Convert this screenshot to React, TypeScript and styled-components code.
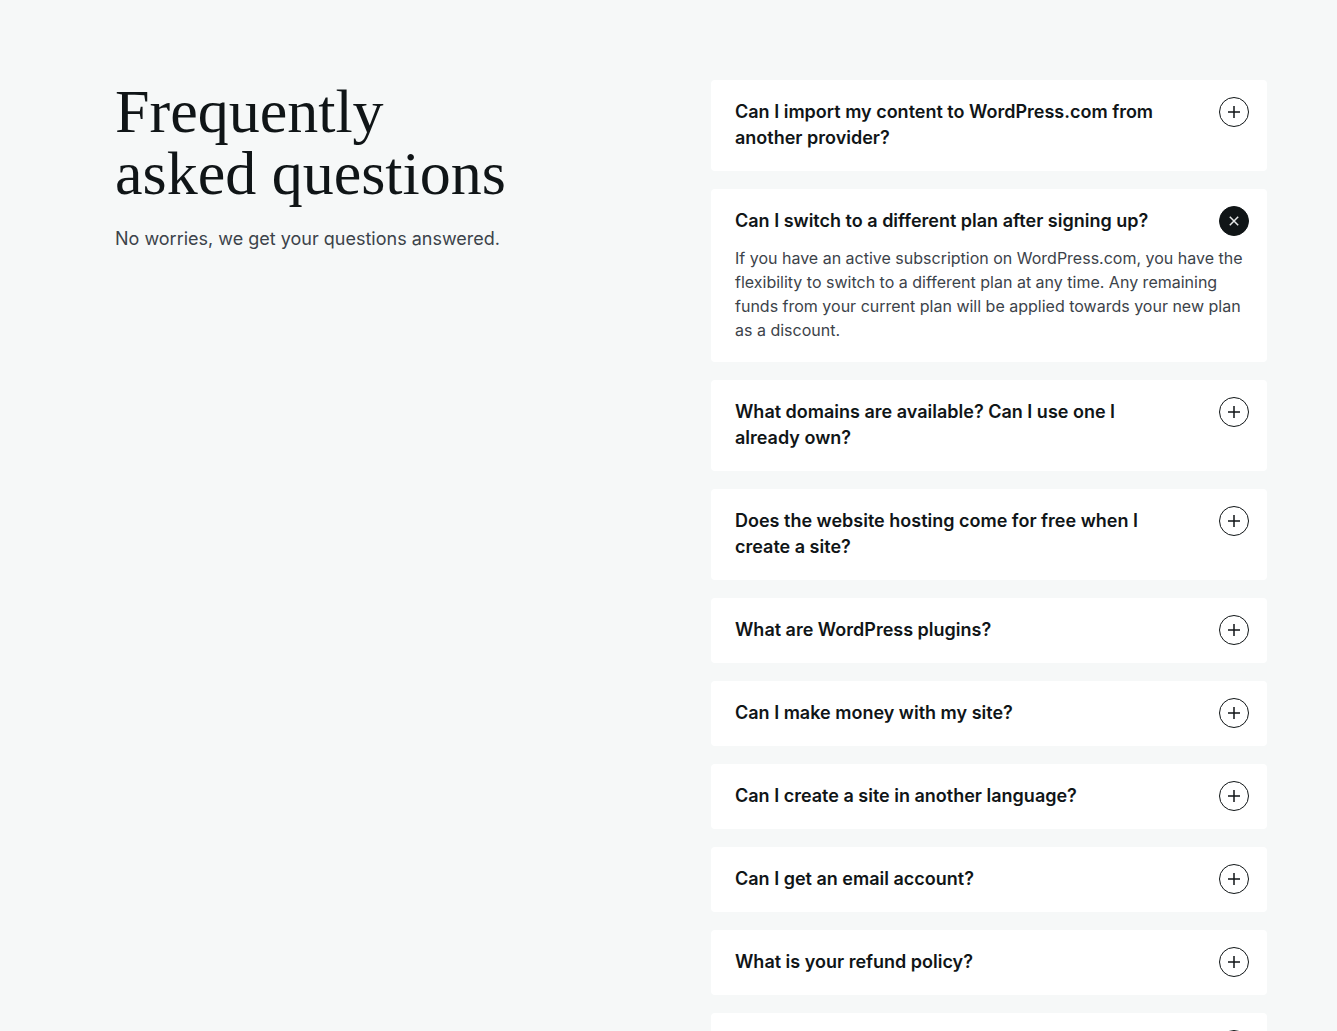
import React, { useState } from "react";
import styled, { createGlobalStyle } from "styled-components";

const GlobalStyle = createGlobalStyle`
  *, *::before, *::after { box-sizing: border-box; }
  body {
    margin: 0;
    background: #f6f8f8;
    color: #101517;
    font-family: Inter, "Liberation Sans", sans-serif;
    -webkit-font-smoothing: antialiased;
  }
`;

const Section = styled.main`
  display: grid;
  grid-template-columns: minmax(0, 1fr) minmax(0, 1fr);
  column-gap: 40px;
  align-items: start;
  padding: 80px 70px 80px 115px;

  @media (max-width: 800px) {
    grid-template-columns: minmax(0, 1fr);
    row-gap: 40px;
    padding: 40px 24px;
  }
`;

const Title = styled.h1`
  margin: 0 0 22px;
  font-family: "Liberation Serif", serif;
  font-size: 62px;
  font-weight: 400;
  line-height: 62px;
`;

const Subtitle = styled.p`
  margin: 0;
  color: #3c434a;
  font-size: 18px;
  line-height: 26px;
`;

const List = styled.div`
  display: flex;
  flex-direction: column;
  gap: 18px;
`;

const Card = styled.article`
  padding: 19px 18px 20px 24px;
  border-radius: 4px;
  background: #fff;
`;

const Question = styled.h2`
  margin: 0;
  font-size: 18px;
  font-weight: 600;
  line-height: 26px;
`;

const Toggle = styled.button`
  display: flex;
  align-items: flex-start;
  justify-content: space-between;
  gap: 48px;
  width: 100%;
  padding: 0;
  border: 0;
  background: none;
  color: inherit;
  font: inherit;
  text-align: left;
  cursor: pointer;
`;

const Icon = styled.svg<{ $open: boolean }>`
  flex: none;
  width: 30px;
  height: 30px;
  margin: -2px 0;
  fill: ${(p) => (p.$open ? "#101517" : "none")};
  stroke: #101517;

  path {
    stroke: ${(p) => (p.$open ? "#e6e8e8" : "#101517")};
    stroke-width: 1.5;
  }
`;

const Answer = styled.p`
  margin: 12px 0 0;
  color: #3c434a;
  font-size: 16px;
  line-height: 24px;
`;

const faqs = [
  {
    q: "Can I import my content to WordPress.com from another provider?",
    a: "Yes, you can import your content from most blogging platforms.",
  },
  {
    q: "Can I switch to a different plan after signing up?",
    a: "If you have an active subscription on WordPress.com, you have the flexibility to switch to a different plan at any time. Any remaining funds from your current plan will be applied towards your new plan as a discount.",
  },
  {
    q: "What domains are available? Can I use one I already own?",
    a: "You can register a new domain or connect one that you already own.",
  },
  {
    q: "Does the website hosting come for free when I create a site?",
    a: "Yes, hosting is included with every site.",
  },
  {
    q: "What are WordPress plugins?",
    a: "Plugins add new features and functionality to your site.",
  },
  {
    q: "Can I make money with my site?",
    a: "Yes, there are several ways to earn from your site.",
  },
  {
    q: "Can I create a site in another language?",
    a: "Yes, you can choose from a wide range of languages.",
  },
  {
    q: "Can I get an email account?",
    a: "Yes, you can add email to your custom domain.",
  },
  {
    q: "What is your refund policy?",
    a: "You can cancel and request a refund within the refund period.",
  },
  {
    q: "Can I hire someone to build my site?",
    a: "Yes, our experts can design and build a site for you.",
  },
];

function FaqItem({
  id,
  question,
  answer,
  defaultOpen,
}: {
  id: string;
  question: string;
  answer: string;
  defaultOpen: boolean;
}) {
  const [open, setOpen] = useState(defaultOpen);
  return (
    <Card>
      <Question>
        <Toggle
          type="button"
          aria-expanded={open}
          aria-controls={id}
          onClick={() => setOpen(!open)}
        >
          <span>{question}</span>
          <Icon $open={open} viewBox="0 0 30 30" aria-hidden="true">
            <circle cx="15" cy="15" r="14.5" />
            <path
              d={
                open
                  ? "M10.8 10.8 19.2 19.2M19.2 10.8 10.8 19.2"
                  : "M15 9v12M9 15h12"
              }
            />
          </Icon>
        </Toggle>
      </Question>
      <Answer id={id} hidden={!open}>
        {answer}
      </Answer>
    </Card>
  );
}

export default function App() {
  return (
    <>
      <GlobalStyle />
      <Section>
        <header>
          <Title>
            Frequently
            <br />
            asked questions
          </Title>
          <Subtitle>No worries, we get your questions answered.</Subtitle>
        </header>
        <List>
          {faqs.map((item, i) => (
            <FaqItem
              key={item.q}
              id={`answer-${i}`}
              question={item.q}
              answer={item.a}
              defaultOpen={i === 1}
            />
          ))}
        </List>
      </Section>
    </>
  );
}
